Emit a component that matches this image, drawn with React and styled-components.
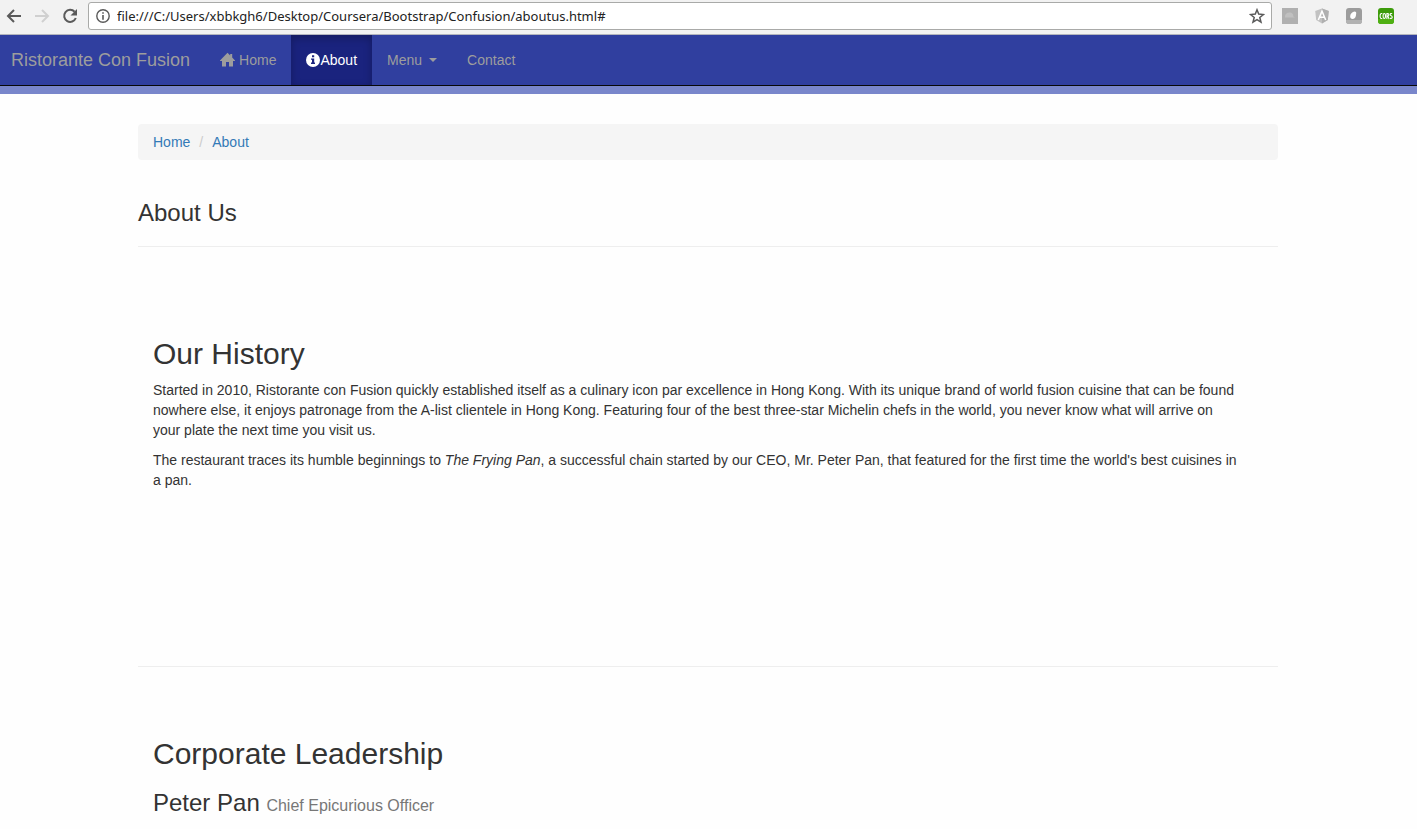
import React from 'react';
import styled, { createGlobalStyle } from 'styled-components';

const GlobalStyle = createGlobalStyle`
  *, *::before, *::after { box-sizing: border-box; }
  body {
    margin: 0;
    background: #fefefe;
    color: #333;
    font: 14px/20px "Liberation Sans", Arial, sans-serif;
  }
`;

const Toolbar = styled.div`
  display: flex;
  align-items: center;
  height: 35px;
  padding: 0 15px 3px 0;
  background: #f2f2f2;
  border-bottom: 1px solid #b3b5bd;
`;

const ToolButton = styled.button`
  display: flex;
  align-items: center;
  justify-content: center;
  flex: none;
  width: ${(p) => p.$width || 28}px;
  height: 28px;
  padding: 0;
  border: 0;
  background: none;
  color: ${(p) => (p.disabled ? '#d0d0d0' : '#5a5a5a')};
`;

const AddressBar = styled.div`
  display: flex;
  align-items: center;
  flex: 1;
  height: 28px;
  margin: 0 2px 0 4px;
  background: #fff;
  border: 1px solid #a9aaa8;
  border-radius: 3px;
`;

const AddressInput = styled.input`
  flex: 1;
  min-width: 0;
  padding: 0;
  border: 0;
  outline: 0;
  background: none;
  color: #222;
  font: 13px/20px "Noto Sans", "Open Sans", sans-serif;
`;

const Navbar = styled.nav`
  display: flex;
  background: #303f9f;
  border-bottom: 1px solid #080808;
`;

const Brand = styled.a`
  padding: 15px 15px 15px 11px;
  color: #9d9d9d;
  font-size: 18px;
  line-height: 20px;
  text-decoration: none;
`;

const NavList = styled.ul`
  display: flex;
  margin: 0;
  padding: 0;
  list-style: none;
`;

const NavLink = styled.a`
  display: flex;
  align-items: center;
  gap: ${(p) => p.$gap || 0}px;
  height: 50px;
  padding: 0 15px;
  color: ${(p) => (p.$active ? '#fff' : '#9d9d9d')};
  background: ${(p) => (p.$active ? '#1a237e' : 'none')};
  box-shadow: ${(p) => (p.$active ? 'inset 0 3px 9px rgba(0, 0, 0, 0.25)' : 'none')};
  text-decoration: none;
`;

const Caret = styled.span`
  border-top: 4px solid;
  border-left: 4px solid transparent;
  border-right: 4px solid transparent;
`;

const Strip = styled.div`
  height: 8px;
  background: #7986cb;
`;

const Container = styled.main`
  max-width: 1171px;
  margin: 0 auto;
  padding: 30px 16px 0 15px;
`;

const Breadcrumb = styled.ol`
  display: flex;
  margin: 0 0 40px;
  padding: 8px 15px;
  background: #f5f5f5;
  border-radius: 4px;
  list-style: none;
`;

const Crumb = styled.li`
  & + &::before {
    content: "/";
    padding: 0 9px;
    color: #ccc;
  }
`;

const CrumbLink = styled.a`
  color: #337ab7;
  text-decoration: none;
`;

const PageTitle = styled.h3`
  margin: 0;
  padding-bottom: 20px;
  border-bottom: 1px solid #eee;
  font-size: 24px;
  font-weight: 400;
  line-height: 26px;
`;

const Section = styled.section`
  min-height: ${(p) => p.$minHeight || 0}px;
  padding: ${(p) => p.$top}px 15px 0;
  border-bottom: ${(p) => (p.$last ? '0' : '1px solid #eee')};
`;

const SectionTitle = styled.h2`
  margin: 0 0 10px;
  font-size: 30px;
  font-weight: 400;
  line-height: 33px;
`;

const Paragraph = styled.p`
  margin: 0 0 10px;
  padding-right: 24px;
`;

const PersonName = styled.h3`
  margin: 20px 0 10px;
  font-size: 24px;
  font-weight: 400;
  line-height: 26px;
`;

const Role = styled.small`
  color: #777;
  font-size: 16px;
`;

const Arrow = ({ flip }) => (
  <svg width="16" height="16" viewBox="0 0 16 16" fill="none" stroke="currentColor" strokeWidth="2">
    {flip ? <path d="M1 8h13M8 2l6 6-6 6" /> : <path d="M15 8H2M8 2L2 8l6 6" />}
  </svg>
);

const ReloadIcon = () => (
  <svg width="16" height="16" viewBox="0 0 16 16" fill="none">
    <path d="M12.6 3.8A6 6 0 1 0 13.8 10" stroke="currentColor" strokeWidth="2" />
    <path d="M15 1v6.5H8.5z" fill="currentColor" />
  </svg>
);

const PageInfoIcon = () => (
  <svg width="14" height="14" viewBox="0 0 14 14">
    <circle cx="7" cy="7" r="6.2" fill="none" stroke="#5a5a5a" strokeWidth="1.4" />
    <path d="M6.2 3.3h1.6v1.5H6.2zM6.2 6h1.6v4.7H6.2z" fill="#5a5a5a" />
  </svg>
);

const StarIcon = () => (
  <svg width="16" height="16" viewBox="0 0 16 16">
    <path
      d="M8 1.8l1.7 4.3 4.7.4-3.6 3 1.2 4.7-4-2.5-4 2.5 1.2-4.7-3.6-3 4.700-.4z"
      fill="none"
      stroke="#5a5a5a"
      strokeWidth="1.5"
    />
  </svg>
);

const HomeIcon = () => (
  <svg width="15" height="16" viewBox="0 0 15 16" fill="currentColor">
    <path d="M7.500 .8l2.700 2.700V2h2v3.500L15 8.600V9h-2v5.500H9V10H6v4.500H2V9H0v-.4z" />
  </svg>
);

const InfoIcon = () => (
  <svg width="14" height="14" viewBox="0 0 14 14">
    <circle cx="7" cy="7" r="7" fill="#fff" />
    <path d="M6 2.2h2.200v2H6zM5 5.400h3.200v4.200H9v1.400H5V9.600h1V6.800H5z" fill="#1a237e" />
  </svg>
);

const GreyExtension = () => (
  <svg width="16" height="16" viewBox="0 0 16 16">
    <path d="M0 0h16v16H0z" fill="#b0b0b0" />
    <path d="M3 8.500c0-3 3-4.500 5.500-4 2 .5 3 2 2.800 4l1.700 1H3z" fill="#c0c0c0" />
  </svg>
);

const ShieldExtension = () => (
  <svg width="16" height="16" viewBox="0 0 16 16">
    <path d="M8 .5l6.800 2.400-1 9L8 15.500l-5.800-3.600-1-9z" fill="#c2c2c2" />
    <path d="M8 .5l6.800 2.400-1 9L8 15.500z" fill="#b0b0b0" />
    <path d="M4.300 12L8 3.200l3.700 8.800M5.800 9.300h4.400" fill="none" stroke="#fff" strokeWidth="1.500" />
  </svg>
);

const LeafExtension = () => (
  <svg width="16" height="16" viewBox="0 0 16 16">
    <rect width="16" height="16" rx="3" fill="#9c9c9c" />
    <path d="M0 12h16v1a3 3 0 0 1-3 3H3a3 3 0 0 1-3-3z" fill="#b2b2b2" />
    <path d="M8.500 3.600c1.600 0 2 1.200 1.600 2.600-.1 2.200-1.100 4.600-3.200 4.900C5 11.200 4 9.700 4.200 8c.2-2.300 2.300-4.200 4.300-4.400z" fill="#fff" />
  </svg>
);

const CorsExtension = () => (
  <svg width="16" height="16" viewBox="0 0 16 16">
    <rect width="16" height="16" rx="3" fill="#3d9c0b" />
    <path d="M0 11h16v2a3 3 0 0 1-3 3H3a3 3 0 0 1-3-3z" fill="#4fb012" />
    <g fill="none" stroke="#fff" strokeWidth="1.100">
      <path d="M4.300 5.600q-2.200-.8-2.200 2.400t2.200 2.400" />
      <ellipse cx="6.300" cy="8" rx="1.200" ry="2.500" />
      <path d="M8.900 11V5.600h.8q1.200 0 1.200 1.200t-1.200 1.200H8.900M9.800 8l1.300 3" />
      <path d="M14.200 5.700q-2-.6-2 .8 0 .9 1 1.300t1 1.400q0 1.600-2.200 1" />
    </g>
  </svg>
);

export default function App() {
  return (
    <>
      <GlobalStyle />
      <Toolbar>
        <ToolButton aria-label="Back"><Arrow /></ToolButton>
        <ToolButton aria-label="Forward" disabled><Arrow flip /></ToolButton>
        <ToolButton aria-label="Reload"><ReloadIcon /></ToolButton>
        <AddressBar>
          <ToolButton aria-label="Page information"><PageInfoIcon /></ToolButton>
          <AddressInput
            aria-label="Address"
            defaultValue="file:///C:/Users/xbbkgh6/Desktop/Coursera/Bootstrap/Confusion/aboutus.html#"
          />
          <ToolButton aria-label="Bookmark"><StarIcon /></ToolButton>
        </AddressBar>
        <ToolButton $width={32} aria-label="Extension"><GreyExtension /></ToolButton>
        <ToolButton $width={32} aria-label="Angular tools"><ShieldExtension /></ToolButton>
        <ToolButton $width={32} aria-label="Leaf tools"><LeafExtension /></ToolButton>
        <ToolButton $width={32} aria-label="Cross-origin requests"><CorsExtension /></ToolButton>
      </Toolbar>

      <Navbar>
        <Brand href="#">Ristorante Con Fusion</Brand>
        <NavList>
          <li><NavLink href="#" $gap={4}><HomeIcon />Home</NavLink></li>
          <li><NavLink href="#" $active><InfoIcon />About</NavLink></li>
          <li><NavLink href="#" $gap={7}>Menu<Caret /></NavLink></li>
          <li><NavLink href="#">Contact</NavLink></li>
        </NavList>
      </Navbar>
      <Strip />

      <Container>
        <Breadcrumb>
          <Crumb><CrumbLink href="#">Home</CrumbLink></Crumb>
          <Crumb><CrumbLink href="#">About</CrumbLink></Crumb>
        </Breadcrumb>
        <PageTitle>About Us</PageTitle>

        <Section $top={90} $minHeight={420}>
          <SectionTitle>Our History</SectionTitle>
          <Paragraph>
            Started in 2010, Ristorante con Fusion quickly established itself as a culinary icon par
            excellence in Hong Kong. With its unique brand of world fusion cuisine that can be found
            nowhere else, it enjoys patronage from the A-list clientele in Hong Kong. Featuring four
            of the best three-star Michelin chefs in the world, you never know what will arrive on
            your plate the next time you visit us.
          </Paragraph>
          <Paragraph>
            The restaurant traces its humble beginnings to <em>The Frying Pan</em>, a successful
            chain started by our CEO, Mr. Peter Pan, that featured for the first time the world's
            best cuisines in a pan.
          </Paragraph>
        </Section>

        <Section $top={70} $last>
          <SectionTitle>Corporate Leadership</SectionTitle>
          <PersonName>
            Peter Pan <Role>Chief Epicurious Officer</Role>
          </PersonName>
        </Section>
      </Container>
    </>
  );
}
